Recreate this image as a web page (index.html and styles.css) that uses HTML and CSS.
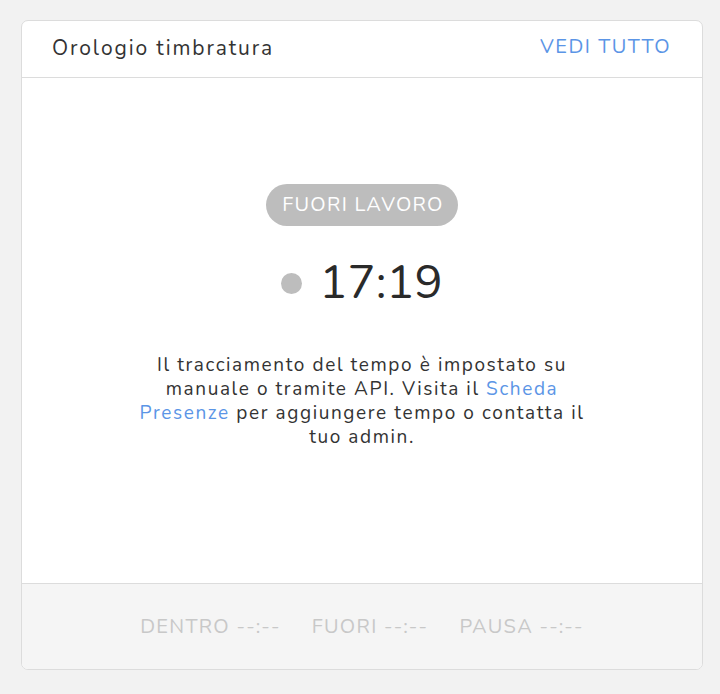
FILE: index.html
```html
<!DOCTYPE html>
<html lang="it">
<head>
    <meta charset="UTF-8">
    <meta name="viewport" content="width=device-width, initial-scale=1.0">
    <title>Orologio timbratura</title>
    <link rel="stylesheet" href="styles.css">
</head>
<body>
    <div class="card">
        <div class="card-header">
            <span class="card-title">Orologio timbratura</span>
            <a class="view-all" href="#">VEDI TUTTO</a>
        </div>
        <div class="card-body">
            <span class="status-badge">FUORI LAVORO</span>
            <div class="clock">
                <span class="clock-dot"></span>
                <span class="clock-time">17:19</span>
            </div>
            <p class="info">Il tracciamento del tempo è impostato su manuale o tramite API. Visita il <a href="#">Scheda Presenze</a> per aggiungere tempo o contatta il tuo admin.</p>
        </div>
        <div class="card-footer">
            <span>DENTRO --:--</span>
            <span>FUORI --:--</span>
            <span>PAUSA --:--</span>
        </div>
    </div>
</body>
</html>
```

FILE: styles.css
```css
body {
    margin: 0;
    padding: 20px 17px 0 21px;
    background-color: #f2f2f2;
    font-family: 'Nunito', 'Lato', 'Noto Sans', sans-serif;
    color: #333333;
}
.card {
    background-color: #ffffff;
    border: 1px solid #dcdcdc;
    border-radius: 7px;
    overflow: hidden;
}
.card-header {
    display: flex;
    justify-content: space-between;
    align-items: center;
    height: 56px;
    padding: 0 32px 0 30px;
    border-bottom: 1px solid #dcdcdc;
}
.card-title {
    font-size: 21px;
    letter-spacing: 1.9px;
    color: #333333;
    margin-top: -3px;
}
.view-all {
    font-size: 20px;
    letter-spacing: 1.5px;
    margin-right: -1px;
    color: #5b95e6;
    text-decoration: none;
    margin-top: -5px;
}
.card-body {
    display: flex;
    flex-direction: column;
    align-items: center;
    height: 505px;
    padding-top: 106px;
    box-sizing: border-box;
}
.status-badge {
    display: inline-block;
    background-color: #bdbdbd;
    color: #ffffff;
    font-size: 20px;
    letter-spacing: 1.3px;
    line-height: 42px;
    padding: 0 14px 0 16px;
    border-radius: 21px;
}
.clock {
    display: flex;
    align-items: center;
    gap: 17px;
    margin-top: 27px;
}
.clock-dot {
    width: 21px;
    height: 21px;
    border-radius: 50%;
    background-color: #bdbdbd;
}
.clock-time {
    font-size: 47px;
    line-height: 60px;
    color: #2a2a2a;
}
.info {
    max-width: 475px;
    margin: 40px 0 0;
    text-align: center;
    font-size: 19px;
    letter-spacing: 1.6px;
    line-height: 24px;
    color: #333333;
}
.info a {
    color: #5b95e6;
    text-decoration: none;
}
.card-footer {
    display: flex;
    justify-content: center;
    align-items: center;
    gap: 31px;
    height: 85px;
    background-color: #f5f5f5;
    border-top: 1px solid #dcdcdc;
    font-size: 20px;
    letter-spacing: 1.3px;
    color: #c8c8c8;
}
```
